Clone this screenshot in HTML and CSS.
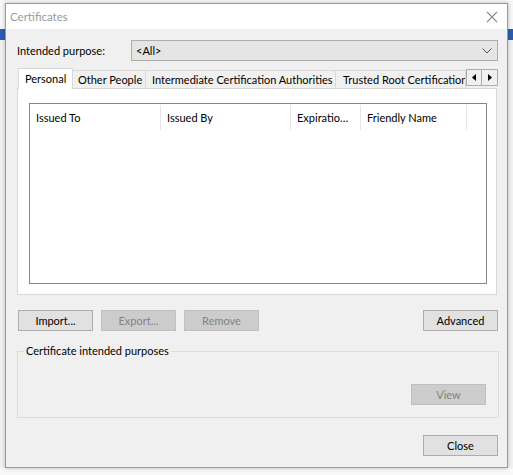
FILE: index.html
```html
<!DOCTYPE html>
<html>
<head>
<meta charset="utf-8">
<link rel="stylesheet" href="styles.css">
</head>
<body>
<div class="dialog">
  <div class="titlebar">
    <span class="title">Certificates</span>
    <svg class="close-x" width="12" height="12" viewBox="0 0 12 12"><path d="M1 1L11 11M11 1L1 11" stroke="#8c8c8c" stroke-width="1.1" fill="none"/></svg>
  </div>
  <div class="content">
    <div class="purpose-row">
      <span class="purpose-label">Intended purpose:</span>
      <div class="combo">
        <span>&lt;All&gt;</span>
        <svg width="10" height="6" viewBox="0 0 10 6"><path d="M0.5 0.5L5 5L9.5 0.5" stroke="#555" stroke-width="1" fill="none"/></svg>
      </div>
    </div>
    <div class="tabs">
      <div class="tab selected t1">Personal</div>
      <div class="tab t2">Other People</div>
      <div class="tab t3">Intermediate Certification Authorities</div>
      <div class="tab t4">Trusted Root Certification Authorities</div>
      <div class="tab-scroll">
        <div class="arrow"><svg width="4" height="7" viewBox="0 0 4 7"><path d="M4 0L0 3.5L4 7Z" fill="#000"/></svg></div>
        <div class="arrow"><svg width="4" height="7" viewBox="0 0 4 7"><path d="M0 0L4 3.5L0 7Z" fill="#000"/></svg></div>
      </div>
    </div>
    <div class="panel">
      <div class="list">
        <div class="list-header">
          <div class="col c1">Issued To</div>
          <div class="col c2">Issued By</div>
          <div class="col c3">Expiratio…</div>
          <div class="col c4">Friendly Name</div>
        </div>
      </div>
    </div>
    <div class="button-row">
      <button class="btn">Import...</button>
      <button class="btn disabled">Export...</button>
      <button class="btn disabled">Remove</button>
      <span class="spacer"></span>
      <button class="btn">Advanced</button>
    </div>
    <fieldset class="group">
      <legend>Certificate intended purposes</legend>
      <div class="group-inner">
        <button class="btn disabled">View</button>
      </div>
    </fieldset>
    <div class="footer">
      <button class="btn">Close</button>
    </div>
  </div>
</div>
</body>
</html>
```
FILE: styles.css
```css
html, body {
  margin: 0;
  padding: 0;
}
body {
  width: 513px;
  height: 475px;
  overflow: hidden;
  background: linear-gradient(#f7f7f7 0 29px, #2b5cb0 29px 40px, #f2f2f2 40px 468px, #f8f8f8 468px);
  font-family: Lato, "Noto Sans", sans-serif;
  font-size: 11px;
  color: #000;
}
.dialog {
  margin: 3px 0 0 5px;
  width: 503px;
  height: 465px;
  box-sizing: border-box;
  border: 1px solid #9a9a9a;
  background: #f0f0f0;
  box-shadow: 0 0 4px rgba(0,0,0,0.25);
  display: flex;
  flex-direction: column;
}
.titlebar {
  height: 25px;
  background: #fff;
  display: flex;
  align-items: center;
  padding: 0 9px 0 4px;
  flex: none;
}
.title {
  color: #9b9b9b;
  font-size: 11.5px;
  flex: 1;
}
.content {
  padding: 11px 9px 0 11px;
  display: flex;
  flex-direction: column;
}
.purpose-row {
  display: flex;
  align-items: center;
  height: 21px;
}
.purpose-label {
  width: 114px;
}
.combo {
  flex: 1;
  height: 21px;
  box-sizing: border-box;
  border: 1px solid #adadad;
  background: #e5e5e5;
  display: flex;
  align-items: center;
  justify-content: space-between;
  padding: 0 5px 0 4px;
}
.tabs {
  margin-top: 7px;
  height: 20px;
  display: flex;
  align-items: flex-end;
  position: relative;
  z-index: 1;
  padding-left: 1px;
}
.tab {
  height: 18px;
  box-sizing: border-box;
  border: 1px solid #d9d9d9;
  border-bottom: none;
  border-left: none;
  background: #f0f0f0;
  padding: 0 0 0 6px;
  display: flex;
  align-items: center;
  white-space: nowrap;
  overflow: hidden;
  flex: none;
}
.tab.selected {
  height: 21px;
  margin-bottom: -1px;
  background: #fff;
  border-left: 1px solid #d9d9d9;
  padding: 0 0 2px 6px;
}
.t1 { width: 55px; }
.t2 { width: 73px; padding-left: 5px; }
.t3 { width: 190px; }
.t4 { width: 130px; padding-left: 7px; }
.tab-scroll {
  display: flex;
  align-self: flex-start;
  margin-top: 1px;
}
.arrow {
  width: 16px;
  height: 17px;
  box-sizing: border-box;
  border: 1px solid #acacac;
  background: #f0f0f0;
  display: flex;
  align-items: center;
  justify-content: center;
}
.arrow + .arrow {
  border-left: none;
}
.panel {
  width: 480px;
  height: 207px;
  box-sizing: border-box;
  border: 1px solid #d9d9d9;
  background: #fff;
  padding: 14px 9px 10px 11px;
}
.list {
  height: 100%;
  box-sizing: border-box;
  border: 1px solid #828790;
  background: #fff;
}
.list-header {
  display: flex;
  height: 28px;
}
.col {
  box-sizing: border-box;
  border-right: 1px solid #e5e5e5;
  margin: 1px 0 2px;
  padding-left: 6px;
  display: flex;
  align-items: center;
  white-space: nowrap;
  overflow: hidden;
}
.c1 { width: 131px; }
.c2 { width: 130px; }
.c3 { width: 70px; }
.c4 { width: 106px; }
.button-row {
  margin-top: 15px;
  display: flex;
  padding-left: 1px;
}
.btn {
  width: 75px;
  height: 21px;
  box-sizing: border-box;
  border: 1px solid #adadad;
  background: #e1e1e1;
  font-family: inherit;
  font-size: 11px;
  color: #000;
  padding: 0;
  margin: 0;
}
.btn.disabled {
  background: #cccccc;
  border-color: #bfbfbf;
  color: #838383;
}
.button-row .btn + .btn {
  margin-left: 8px;
}
.spacer {
  flex: 1;
}
.group {
  margin: 13px 0 0 0;
  padding: 0;
  width: 482px;
  box-sizing: border-box;
  border: 1px solid #dcdcdc;
  min-width: 0;
}
.group legend {
  padding: 0 2px;
  margin-left: 6px;
  line-height: 14px;
}
.group-inner {
  height: 59px;
  display: flex;
  justify-content: flex-end;
  align-items: flex-start;
  padding: 26px 12px 0 0;
  box-sizing: border-box;
}
.footer {
  margin-top: 17px;
  display: flex;
  justify-content: flex-end;
}
```
